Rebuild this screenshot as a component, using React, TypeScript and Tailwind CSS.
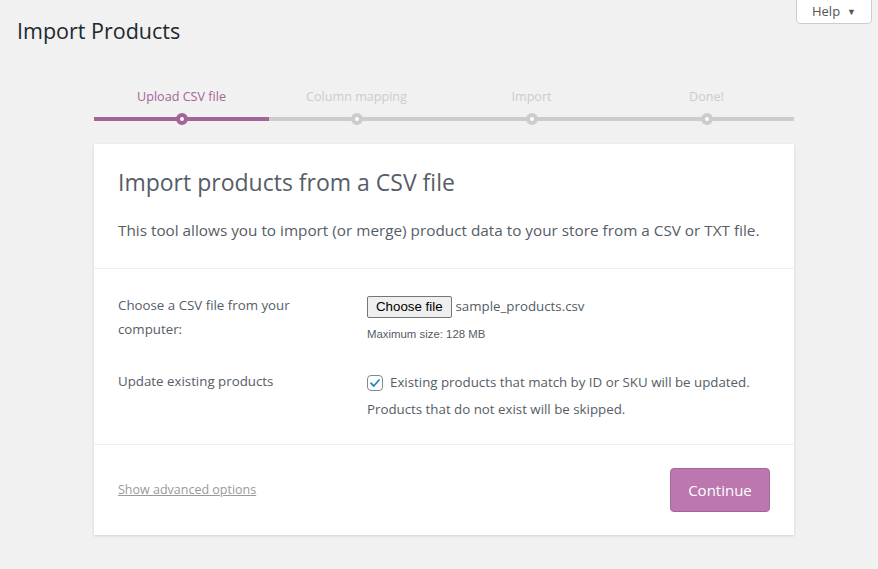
import React from "react";

const steps = ["Upload CSV file", "Column mapping", "Import", "Done!"];

export default function App() {
  return (
    <div
      className="relative min-h-[569px] w-full bg-[#f1f1f1] text-[#444]"
      style={{ fontFamily: '"Open Sans", "Noto Sans", sans-serif' }}
    >
      <div className="absolute right-[6px] top-[-1px] flex h-[25px] w-[76px] items-center justify-center gap-[7px] rounded-b-[4px] border border-[#ccc] bg-white text-[13px] text-[#555]">
        <span>Help</span>
        <span className="text-[9px]">▼</span>
      </div>

      <h1 className="pl-[17px] pt-[17px] text-[21.5px] leading-[28px] font-normal text-[#23282d]">
        Import Products
      </h1>

      <div className="ml-[94px] w-[700px]">
        {/* stepper */}
        <div className="mt-[42px] grid grid-cols-4">
          {steps.map((s, i) => (
            <div key={s} className="flex flex-col items-center">
              <div
                className={
                  "h-[20px] text-[12.6px] leading-[20px] " +
                  (i === 0 ? "text-[#a46497]" : "text-[#ccc]")
                }
              >
                {s}
              </div>
              <div className="relative mt-[10px] h-[4px] w-full">
                <div
                  className={
                    "h-[4px] w-full " + (i === 0 ? "bg-[#a46497]" : "bg-[#ccc]")
                  }
                />
                <div
                  className={
                    "absolute left-1/2 top-1/2 h-[12px] w-[12px] -translate-x-1/2 -translate-y-1/2 rounded-full border-[4px] bg-white " +
                    (i === 0 ? "border-[#a46497]" : "border-[#ccc]")
                  }
                />
              </div>
            </div>
          ))}
        </div>

        {/* card */}
        <div className="mt-[23px] bg-white shadow-[0_1px_3px_rgba(0,0,0,0.13)]">
          <div className="border-b border-[#eee] px-[24px] pb-[26px] pt-[24px]">
            <h2 className="text-[23px] leading-[28px] font-normal text-[#555d66]">
              Import products from a CSV file
            </h2>
            <p className="mt-[22px] text-[15.3px] leading-[24px] text-[#555d66]">
              This tool allows you to import (or merge) product data to your store from a CSV or TXT file.
            </p>
          </div>

          <div className="border-b border-[#eee] px-[24px] pb-[21px] pt-[24px] text-[13.3px] text-[#555d66]">
            <div className="flex">
              <div className="w-[249px] shrink-0 pr-[10px] leading-[24px]">
                <div className="max-w-[190px]">Choose a CSV file from your computer:</div>
              </div>
              <div>
                <div className="flex items-center">
                  <span
                    className="mt-[3px] flex h-[22px] items-center rounded-[2px] border border-[#767676] bg-[#efefef] px-[8px] text-[13.3px] text-black"
                    style={{ fontFamily: '"Liberation Sans", Arial, sans-serif' }}
                  >
                    Choose file
                  </span>
                  <span className="ml-[4px] mt-[3px] text-[13.3px] text-[#555d66]">sample_products.csv</span>
                </div>
                <div
                  className="mt-[9px] text-[11.4px] leading-[14px] text-[#555d66]"
                  style={{ fontFamily: '"Liberation Sans", Arial, sans-serif' }}
                >
                  Maximum size: 128 MB
                </div>
              </div>
            </div>

            <div className="mt-[28px] flex">
              <div className="w-[249px] shrink-0 leading-[24px]">Update existing products</div>
              <div className="leading-[27px]">
                <div className="flex items-center">
                  <span className="flex h-[16px] w-[16px] items-center justify-center rounded-[4px] border border-[#7e8993] bg-white">
                    <svg width="14" height="14" viewBox="0 0 14 14">
                      <path d="M3 7.2 L5.8 10 L11 4" fill="none" stroke="#1e8cbe" strokeWidth="1.8" strokeLinecap="round" strokeLinejoin="round" />
                    </svg>
                  </span>
                  <span className="ml-[7px]">Existing products that match by ID or SKU will be updated.</span>
                </div>
                <div>Products that do not exist will be skipped.</div>
              </div>
            </div>
          </div>

          <div className="flex items-center justify-between px-[24px] py-[23px]">
            <a className="text-[12.5px] text-[#999] underline">Show advanced options</a>
            <button className="h-[44px] w-[100px] rounded-[4px] border border-[#a36597] bg-[#bb77ae] text-[15px] text-white">
              Continue
            </button>
          </div>
        </div>
      </div>
    </div>
  );
}
